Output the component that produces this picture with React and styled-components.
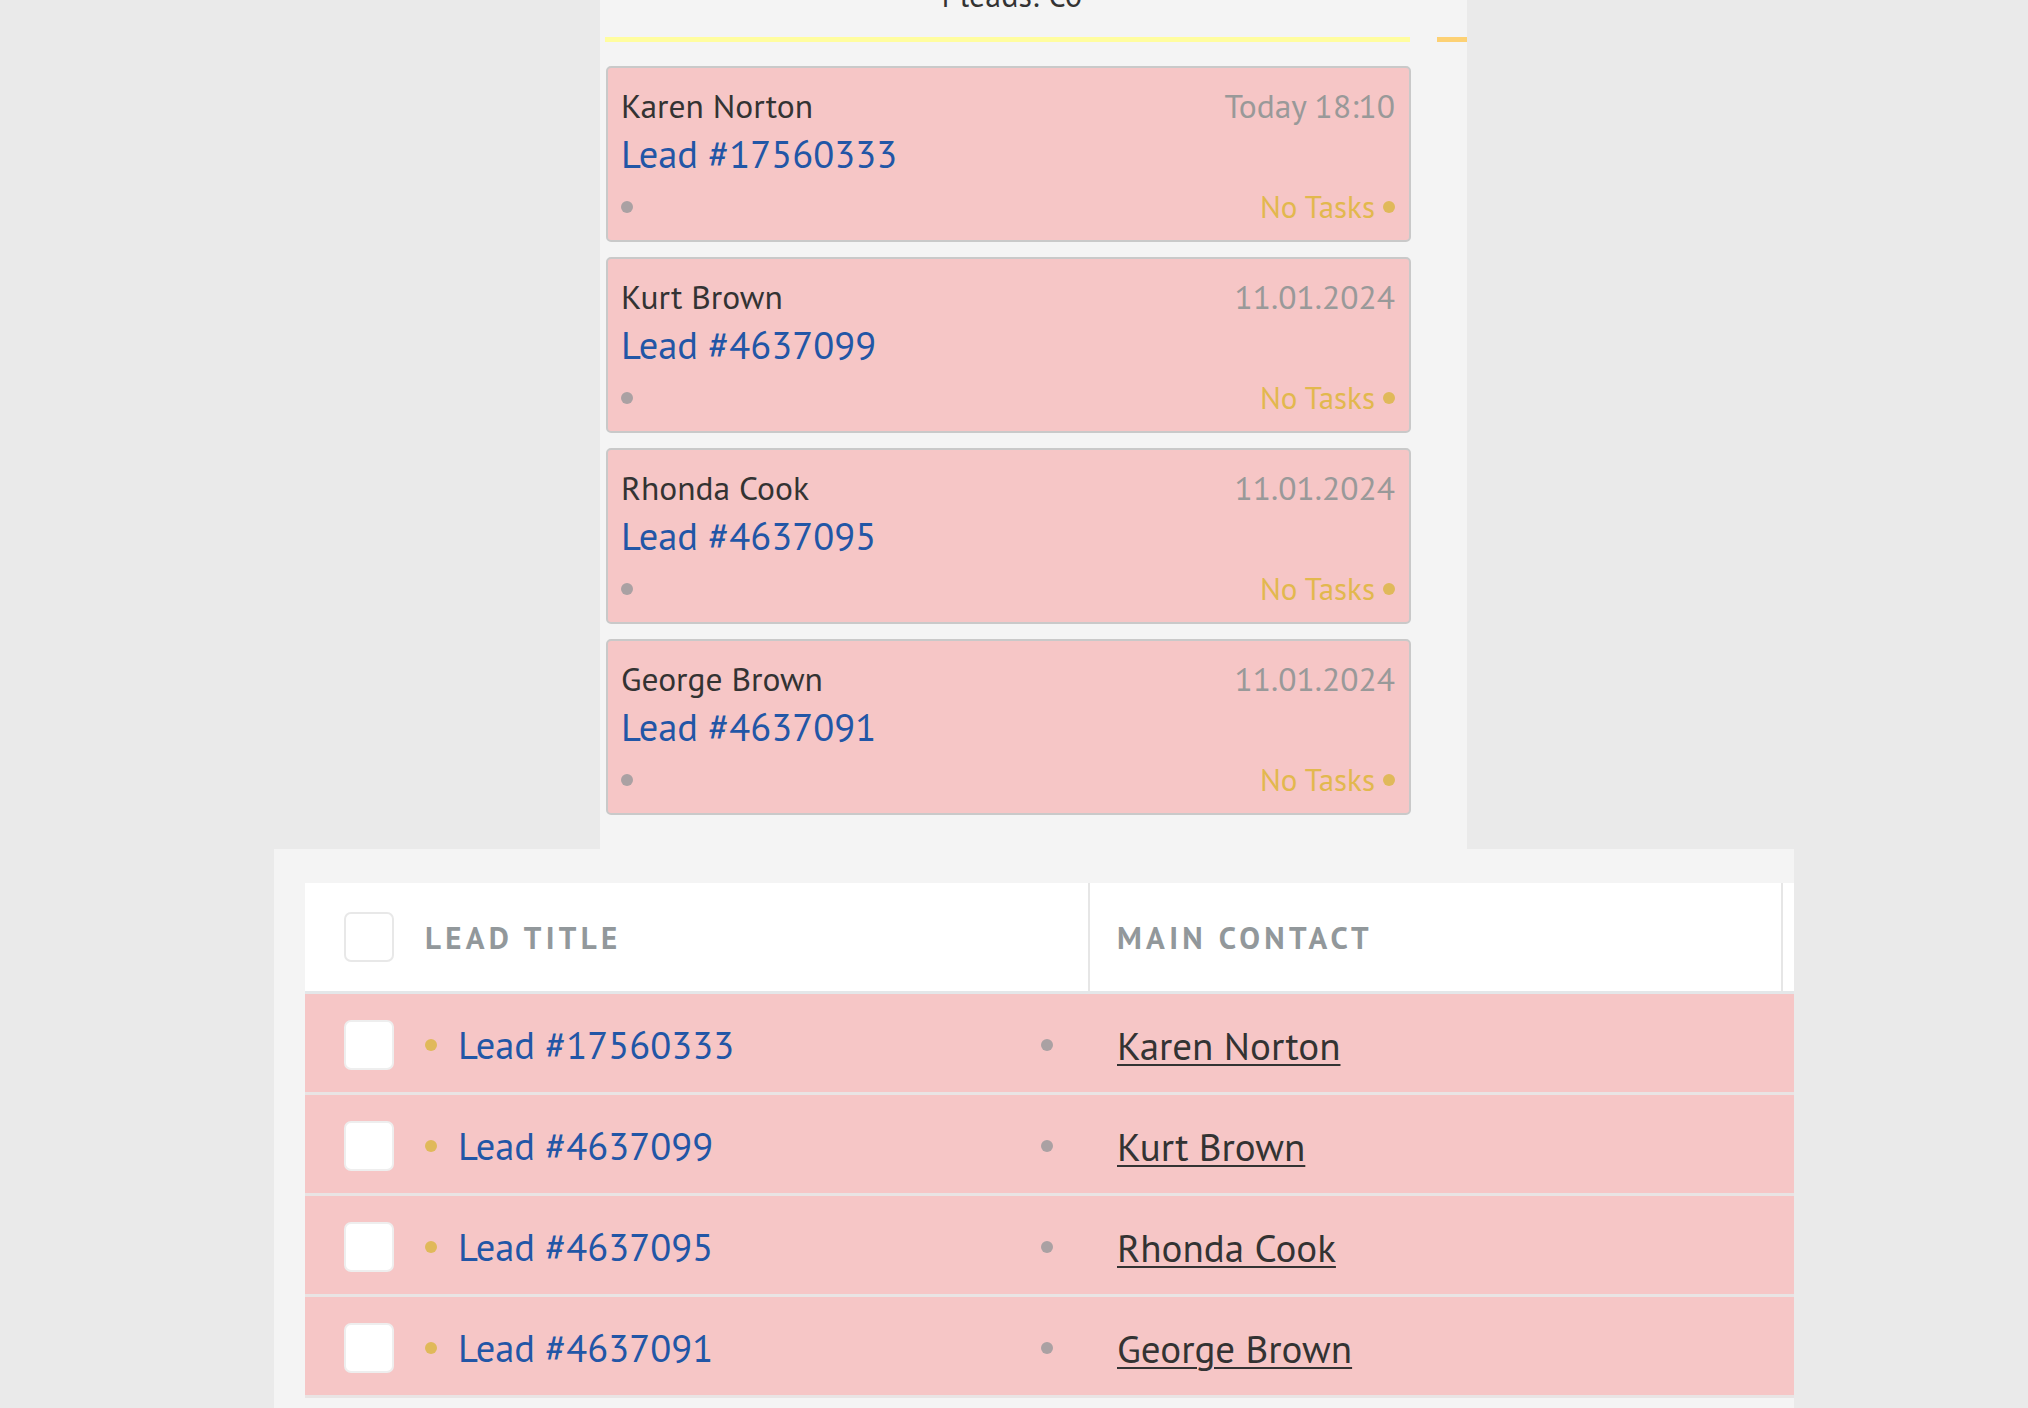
import styled, { createGlobalStyle } from 'styled-components';

const GlobalStyle = createGlobalStyle`
  html, body {
    margin: 0;
    padding: 0;
    background: #eaeaea;
  }
  body {
    font-family: "PT Sans", Roboto, "Liberation Sans", sans-serif;
    color: #333333;
  }
`;

const leads = [
  { name: 'Karen Norton', id: '17560333', date: 'Today 18:10' },
  { name: 'Kurt Brown', id: '4637099', date: '11.01.2024' },
  { name: 'Rhonda Cook', id: '4637095', date: '11.01.2024' },
  { name: 'George Brown', id: '4637091', date: '11.01.2024' },
];

function App() {
  return (
    <>
      <GlobalStyle />
      <Page>
        <Board>
          <Column>
            <ColumnTitle>4 leads: €0</ColumnTitle>
            <StageLine color="#fffd9f" />
            <CardList>
              {leads.map((lead) => (
                <Card key={lead.id}>
                  <CardTop>
                    <CardName>{lead.name}</CardName>
                    <CardDate>{lead.date}</CardDate>
                  </CardTop>
                  <LeadLink href="#">Lead #{lead.id}</LeadLink>
                  <CardBottom>
                    <Dot color="#aaa1a3" />
                    <NoTasks>
                      No Tasks
                      <Dot color="#e0b95a" />
                    </NoTasks>
                  </CardBottom>
                </Card>
              ))}
            </CardList>
          </Column>
          <NextColumn>
            <StageLine color="#fdd174" />
          </NextColumn>
        </Board>

        <TablePanel>
          <Table>
            <HeadRow>
              <HeadCell>
                <Checkbox $head />
                <HeadLabel>Lead title</HeadLabel>
              </HeadCell>
              <HeadCell $contact>
                <HeadLabel>Main contact</HeadLabel>
              </HeadCell>
              <HeadCell />
            </HeadRow>
            {leads.map((lead) => (
              <Row key={lead.id}>
                <Cell>
                  <Checkbox />
                  <Dot color="#e0b95a" />
                  <RowLink href="#">Lead #{lead.id}</RowLink>
                  <RowTrail>
                    <Dot color="#aaa1a3" />
                  </RowTrail>
                </Cell>
                <Cell $contact>
                  <ContactLink href="#">{lead.name}</ContactLink>
                </Cell>
                <Cell />
              </Row>
            ))}
          </Table>
        </TablePanel>
      </Page>
    </>
  );
}

export default App;

const Page = styled.div`
  width: 2028px;
  height: 100vh;
  overflow: hidden;
  display: flex;
  flex-direction: column;
`;

/* kanban board, scrolled a little so the column title is cut at the top */
const Board = styled.div`
  margin-top: -25px;
  margin-left: 600px;
  width: 867px;
  background: #f4f4f4;
  display: flex;
  gap: 26px;
  padding: 0 0 34px 5px;
  box-sizing: border-box;
  overflow: hidden;
  flex-shrink: 0;
`;

const Column = styled.div`
  width: 806px;
  flex-shrink: 0;
  display: flex;
  flex-direction: column;
`;

const NextColumn = styled.div`
  width: 300px;
  flex-shrink: 0;
  display: flex;
  flex-direction: column;
  padding-top: 62px;
`;

const ColumnTitle = styled.div`
  font-size: 32px;
  line-height: 40px;
  text-align: center;
  color: #333333;
  margin-bottom: 22px;
`;

const StageLine = styled.div`
  height: 5px;
  background: ${(p) => p.color};
  margin-right: ${(p) => (p.color === '#fffd9f' ? '1px' : '0')};
`;

const CardList = styled.div`
  display: flex;
  flex-direction: column;
  gap: 15px;
  margin-top: 24px;
  padding-left: 1px;
`;

const Card = styled.div`
  height: 176px;
  box-sizing: border-box;
  background: #f6c6c6;
  border: 2px solid #c9c9c9;
  border-radius: 5px;
  padding: 18px 14px 0 13px;
  display: flex;
  flex-direction: column;
`;

const CardTop = styled.div`
  display: flex;
  justify-content: space-between;
  align-items: baseline;
  height: 40px;
  line-height: 40px;
  font-size: 33.5px;
`;

const CardName = styled.span`
  color: #333333;
`;

const CardDate = styled.span`
  color: #999999;
`;

const LeadLink = styled.a`
  font-size: 38.5px;
  line-height: 56px;
  height: 56px;
  color: #2256a6;
  text-decoration: none;
  align-self: flex-start;
`;

const CardBottom = styled.div`
  margin-top: 9px;
  height: 32px;
  display: flex;
  justify-content: space-between;
  align-items: center;
`;

const NoTasks = styled.span`
  display: flex;
  align-items: center;
  gap: 8px;
  font-size: 31px;
  line-height: 32px;
  color: #e2b84e;
`;

const Dot = styled.span`
  display: inline-block;
  width: 12px;
  height: 12px;
  border-radius: 50%;
  background: ${(p) => p.color};
  flex-shrink: 0;
`;

/* leads list below the board */
const TablePanel = styled.div`
  flex: 1;
  margin-left: 274px;
  width: 1520px;
  background: #f4f4f4;
  padding: 34px 0 0 31px;
  box-sizing: border-box;
  overflow: hidden;
`;

const Table = styled.div`
  display: flex;
  flex-direction: column;
`;

const HeadRow = styled.div`
  display: grid;
  grid-template-columns: 785px 693px 1fr;
  height: 111px;
  box-sizing: border-box;
  background: #ffffff;
  border-bottom: 3px solid #e4e7e9;
`;

const HeadCell = styled.div`
  display: flex;
  align-items: center;
  padding-left: ${(p) => (p.$contact ? '27px' : '39px')};
  border-right: 2px solid #e6e6e6;
  &:last-child {
    border-right: none;
  }
`;

const HeadLabel = styled.span`
  font-size: 31px;
  font-weight: 700;
  letter-spacing: 4.3px;
  text-transform: uppercase;
  color: #92989b;
`;

const Checkbox = styled.span`
  width: 50px;
  height: 50px;
  box-sizing: border-box;
  border: 2px solid ${(p) => (p.$head ? '#e8e8e8' : '#eeeeee')};
  border-radius: 7px;
  background: #ffffff;
  margin-right: 31px;
  flex-shrink: 0;
`;

const Row = styled.div`
  display: grid;
  grid-template-columns: 785px 693px 1fr;
  height: 101px;
  box-sizing: border-box;
  background: #f6c6c6;
  border-bottom: 3px solid #e9e4e4;
`;

const Cell = styled.div`
  display: flex;
  align-items: center;
  padding-left: ${(p) => (p.$contact ? '27px' : '39px')};
  padding-top: 4px;
`;

const RowLink = styled.a`
  margin-left: 21px;
  font-size: 38.5px;
  color: #2256a6;
  text-decoration: none;
`;

const RowTrail = styled.span`
  margin-left: auto;
  margin-right: 37px;
  display: flex;
`;

const ContactLink = styled.a`
  font-size: 39px;
  color: #333333;
  text-decoration: underline;
  text-decoration-thickness: 2px;
  text-underline-offset: 4px;
`;
